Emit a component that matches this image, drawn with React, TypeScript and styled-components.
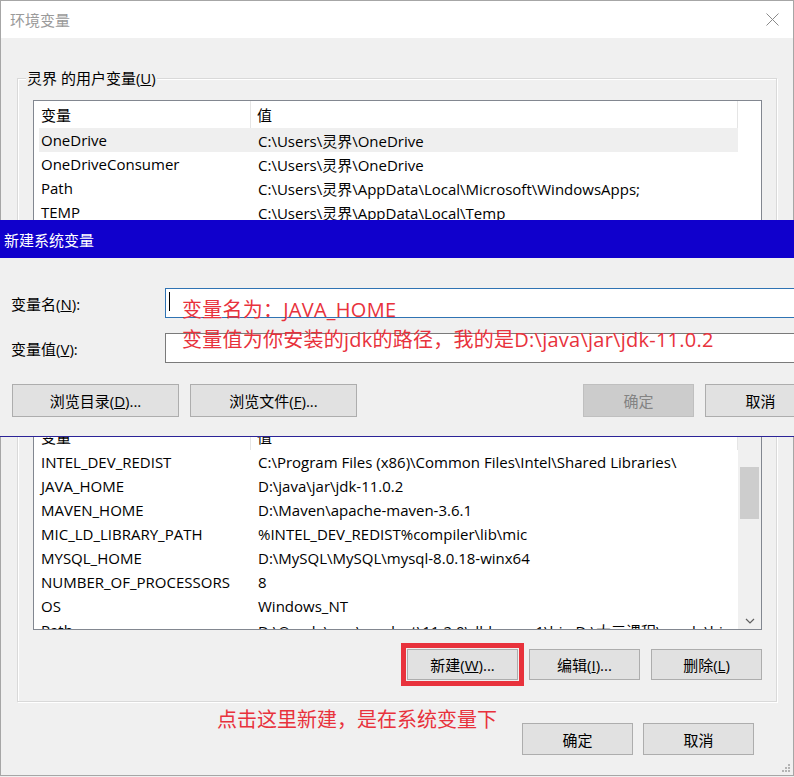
import React from 'react'
import styled, { createGlobalStyle, css } from 'styled-components'

const GlobalStyle = createGlobalStyle`
  html, body {
    margin: 0;
    padding: 0;
    overflow: hidden;
    background: #f0f0f0;
  }
  body {
    font-family: "Open Sans", "Noto Sans CJK SC", sans-serif;
    font-size: 15px;
    color: #000;
  }
  * {
    box-sizing: border-box;
  }
`

type Row = { name: string; value: string; selected?: boolean }

const userVars: Row[] = [
    { name: 'OneDrive', value: 'C:\\Users\\灵界\\OneDrive', selected: true },
    { name: 'OneDriveConsumer', value: 'C:\\Users\\灵界\\OneDrive' },
    { name: 'Path', value: 'C:\\Users\\灵界\\AppData\\Local\\Microsoft\\WindowsApps;' },
    { name: 'TEMP', value: 'C:\\Users\\灵界\\AppData\\Local\\Temp' },
    { name: 'TMP', value: 'C:\\Users\\灵界\\AppData\\Local\\Temp' },
]

const systemVars: Row[] = [
    { name: 'INTEL_DEV_REDIST', value: 'C:\\Program Files (x86)\\Common Files\\Intel\\Shared Libraries\\' },
    { name: 'JAVA_HOME', value: 'D:\\java\\jar\\jdk-11.0.2' },
    { name: 'MAVEN_HOME', value: 'D:\\Maven\\apache-maven-3.6.1' },
    { name: 'MIC_LD_LIBRARY_PATH', value: '%INTEL_DEV_REDIST%compiler\\lib\\mic' },
    { name: 'MYSQL_HOME', value: 'D:\\MySQL\\MySQL\\mysql-8.0.18-winx64' },
    { name: 'NUMBER_OF_PROCESSORS', value: '8' },
    { name: 'OS', value: 'Windows_NT' },
    { name: 'Path', value: 'D:\\Oracle\\app\\product\\11.2.0\\dbhome_1\\bin;D:\\大三课程\\oracle\\bin' },
]

function VarTable({ rows, height, scroll }: { rows: Row[]; height: number; scroll?: boolean }) {
    return (
        <VarList $height={height}>
            <ListContent>
                <HeaderRow>
                    <HeaderCell $first>变量</HeaderCell>
                    <HeaderCell>值</HeaderCell>
                </HeaderRow>
                {rows.map((r, i) => (
                    <ItemRow key={i} $selected={r.selected}>
                        <NameCell>{r.name}</NameCell>
                        <ValueCell>{r.value}</ValueCell>
                    </ItemRow>
                ))}
            </ListContent>
            <ScrollTrack $visible={scroll}>
                {scroll && (
                    <>
                        <ArrowBox>
                            <svg width="10" height="6" viewBox="0 0 10 6">
                                <polyline points="1,5 5,1 9,5" fill="none" stroke="#606060" strokeWidth="1.2" />
                            </svg>
                        </ArrowBox>
                        <Thumb $top={27} $height={52} />
                        <Spacer />
                        <ArrowBox>
                            <svg width="10" height="6" viewBox="0 0 10 6">
                                <polyline points="1,1 5,5 9,1" fill="none" stroke="#606060" strokeWidth="1.2" />
                            </svg>
                        </ArrowBox>
                    </>
                )}
            </ScrollTrack>
        </VarList>
    )
}

export default function App() {
    return (
        <Page>
            <GlobalStyle />
            <EnvWindow>
                <TitleBar>
                    <span>环境变量</span>
                    <svg width="13" height="13" viewBox="0 0 13 13">
                        <line x1="0.5" y1="0.5" x2="12.5" y2="12.5" stroke="#8a8a8a" strokeWidth="1" />
                        <line x1="12.5" y1="0.5" x2="0.5" y2="12.5" stroke="#8a8a8a" strokeWidth="1" />
                    </svg>
                </TitleBar>
                <Body>
                    <GroupBox>
                        <GroupLabel>灵界 的用户变量(<u>U</u>)</GroupLabel>
                        <VarTable rows={userVars} height={216} />
                        <ButtonRow>
                            <WinButton>新建(<u>N</u>)...</WinButton>
                            <WinButton>编辑(<u>E</u>)...</WinButton>
                            <WinButton>删除(<u>D</u>)</WinButton>
                        </ButtonRow>
                    </GroupBox>
                    <GroupBox $gap={11}>
                        <GroupLabel>系统变量(<u>S</u>)</GroupLabel>
                        <VarTable rows={systemVars} height={208} scroll />
                        <ButtonRow $gap={19}>
                            <WinButton $highlight>新建(<u>W</u>)...</WinButton>
                            <WinButton>编辑(<u>I</u>)...</WinButton>
                            <WinButton>删除(<u>L</u>)</WinButton>
                        </ButtonRow>
                    </GroupBox>
                    <Footer>
                        <WinButton $height={32}>确定</WinButton>
                        <WinButton $height={32}>取消</WinButton>
                    </Footer>
                </Body>
                <Grip>
                    <svg width="10" height="10" viewBox="0 0 10 10">
                        {[[8, 2], [8, 5], [5, 5], [8, 8], [5, 8], [2, 8]].map(([x, y], i) => (
                            <rect key={i} x={x} y={y} width="2" height="2" fill="#b4b4b4" />
                        ))}
                    </svg>
                </Grip>
            </EnvWindow>

            <NewVarDialog>
                <DialogTitle>新建系统变量</DialogTitle>
                <DialogBody>
                    <FieldRow>
                        <FieldLabel>变量名(<u>N</u>):</FieldLabel>
                        <TextBox $focused>
                            <Caret />
                        </TextBox>
                    </FieldRow>
                    <FieldRow $gap={15}>
                        <FieldLabel>变量值(<u>V</u>):</FieldLabel>
                        <TextBox />
                    </FieldRow>
                    <DialogButtons>
                        <ButtonGroup>
                            <WinButton $width={167} $height={33}>浏览目录(<u>D</u>)...</WinButton>
                            <WinButton $width={167} $height={33}>浏览文件(<u>F</u>)...</WinButton>
                        </ButtonGroup>
                        <ButtonGroup>
                            <WinButton $height={33} disabled>确定</WinButton>
                            <WinButton $height={33}>取消</WinButton>
                        </ButtonGroup>
                    </DialogButtons>
                </DialogBody>
                <DialogNote>
                    <div>变量名为：JAVA_HOME</div>
                    <div>变量值为你安装的jdk的路径，我的是D:\java\jar\jdk-11.0.2</div>
                </DialogNote>
            </NewVarDialog>

            <ClickNote>点击这里新建，是在系统变量下</ClickNote>
        </Page>
    )
}

const annotationRed = '#e8323c'

const Page = styled.div`
    position: relative;
    width: 794px;
    height: 777px;
    overflow: hidden;
`

const EnvWindow = styled.div`
    position: relative;
    width: 794px;
    height: 776px;
    border: 1px solid #a6a6a6;
    background: #f0f0f0;
    display: flex;
    flex-direction: column;
`

const TitleBar = styled.div`
    height: 37px;
    flex-shrink: 0;
    background: #fff;
    display: flex;
    align-items: center;
    justify-content: space-between;
    padding: 0 14px 0 9px;
    color: #9a9a9a;
    font-family: "Noto Sans CJK SC", sans-serif;
    font-size: 15px;
`

const Body = styled.div`
    display: flex;
    flex-direction: column;
    padding: 40px 16px 0;
`

const GroupBox = styled.div<{ $gap?: number }>`
    position: relative;
    margin-top: ${p => p.$gap ?? 0}px;
    border: 1px solid #d9d9d9;
    box-shadow: inset 1px 1px 0 #fff, 1px 1px 0 #fff;
    padding: 21px 14px 21px 15px;
`

const GroupLabel = styled.span`
    position: absolute;
    top: -11px;
    left: 8px;
    padding: 0 1px;
    line-height: 20px;
    background: #f0f0f0;
`

const VarList = styled.div<{ $height: number }>`
    height: ${p => p.$height}px;
    border: 1px solid #828790;
    background: #fff;
    display: flex;
    overflow: hidden;
`

const ListContent = styled.div`
    flex: 1;
    padding-left: 5px;
    overflow: hidden;
`

const HeaderRow = styled.div`
    display: flex;
    height: 27px;
`

const HeaderCell = styled.div<{ $first?: boolean }>`
    display: flex;
    align-items: center;
    border-right: 1px solid #e5e5e5;
    ${p => p.$first
        ? css`width: 212px; padding-left: 2px;`
        : css`flex: 1; padding-left: 6px;`}
`

const ItemRow = styled.div<{ $selected?: boolean }>`
    display: flex;
    align-items: center;
    height: 24px;
    white-space: nowrap;
    background: ${p => (p.$selected ? '#efefef' : 'transparent')};
`

const NameCell = styled.div`
    width: 212px;
    flex-shrink: 0;
    padding-left: 2px;
    overflow: hidden;
`

const ValueCell = styled.div`
    flex: 1;
    padding-left: 7px;
    overflow: hidden;
`

const ScrollTrack = styled.div<{ $visible?: boolean }>`
    width: 23px;
    flex-shrink: 0;
    display: flex;
    flex-direction: column;
    align-items: center;
    background: ${p => (p.$visible ? '#f0f0f0' : '#fff')};
`

const ArrowBox = styled.div`
    height: 17px;
    width: 100%;
    display: flex;
    align-items: center;
    justify-content: center;
`

const Thumb = styled.div<{ $top: number; $height: number }>`
    margin-top: ${p => p.$top}px;
    width: 19px;
    height: ${p => p.$height}px;
    background: #cdcdcd;
`

const Spacer = styled.div`
    flex: 1;
`

const ButtonRow = styled.div<{ $gap?: number }>`
    display: flex;
    justify-content: flex-end;
    gap: 11px;
    margin-top: ${p => p.$gap ?? 20}px;
`

const WinButton = styled.button<{ $width?: number; $height?: number; $highlight?: boolean }>`
    width: ${p => p.$width ?? 111}px;
    height: ${p => p.$height ?? 31}px;
    padding: 0;
    border: 1px solid #adadad;
    background: #e1e1e1;
    font-family: "Open Sans", "Noto Sans CJK SC", sans-serif;
    font-size: 15px;
    color: #000;
    &:disabled {
        background: #cccccc;
        border-color: #bfbfbf;
        color: #838383;
    }
    ${p => p.$highlight && css`
        outline: 5px solid ${annotationRed};
        outline-offset: 1px;
    `}
`

const Footer = styled.div`
    display: flex;
    justify-content: flex-end;
    gap: 10px;
    margin-top: 21px;
    padding-right: 23px;
`

const Grip = styled.div`
    position: absolute;
    right: 3px;
    bottom: 3px;
    line-height: 0;
`

const NewVarDialog = styled.div`
    position: absolute;
    top: 220px;
    left: 0;
    width: 828px;
    background: #f0f0f0;
    border-bottom: 1px solid #2b2397;
`

const DialogTitle = styled.div`
    height: 38px;
    display: flex;
    align-items: center;
    padding-left: 4px;
    background: #1000cc;
    color: #fff;
    font-family: "Noto Sans CJK SC", sans-serif;
    font-size: 15px;
`

const DialogBody = styled.div`
    padding: 30px 12px 19px 11px;
`

const FieldRow = styled.div<{ $gap?: number }>`
    display: flex;
    align-items: center;
    margin-top: ${p => p.$gap ?? 0}px;
`

const FieldLabel = styled.div`
    width: 154px;
    flex-shrink: 0;
`

const TextBox = styled.div<{ $focused?: boolean }>`
    flex: 1;
    height: 30px;
    background: #fff;
    border: 1px solid ${p => (p.$focused ? '#2f73b3' : '#7a7a7a')};
    padding: 3px 3px;
`

const Caret = styled.span`
    display: block;
    width: 1px;
    height: 19px;
    background: #000;
`

const DialogButtons = styled.div`
    display: flex;
    justify-content: space-between;
    margin-top: 21px;
`

const ButtonGroup = styled.div`
    display: flex;
    gap: 11px;
    margin-left: 1px;
`

const DialogNote = styled.div`
    position: absolute;
    top: 75px;
    left: 182px;
    color: ${annotationRed};
    font-size: 20px;
    line-height: 30px;
    letter-spacing: 0.25px;
    white-space: nowrap;
`

const ClickNote = styled.div`
    position: absolute;
    top: 705px;
    left: 217px;
    color: ${annotationRed};
    font-size: 20px;
    line-height: 30px;
    white-space: nowrap;
`
